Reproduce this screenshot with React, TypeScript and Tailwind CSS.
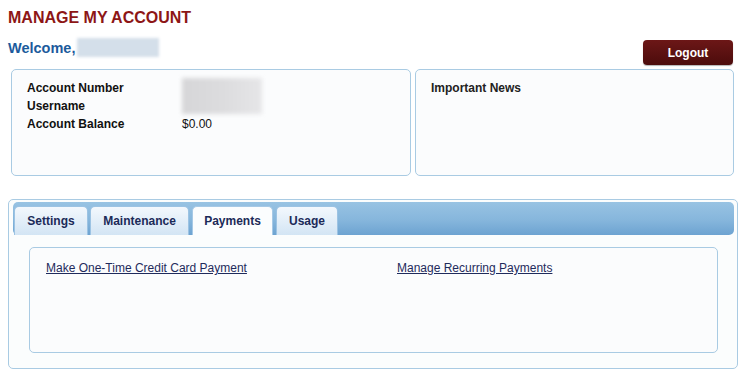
import React from 'react';

const tabs = [
    { label: 'Settings', cls: 'w-[74px]', active: false },
    { label: 'Maintenance', cls: 'w-[99px]', active: false },
    { label: 'Payments', cls: 'w-[81px] ml-[1px]', active: true },
    { label: 'Usage', cls: 'w-[62px] ml-[1px]', active: false },
];

export default function App() {
    return (
        <div className="min-h-screen bg-white font-['Liberation_Sans',Arial,sans-serif] pl-2 pt-[9px]">
            <div className="w-[730px]">
                {/* header */}
                <h1 className="text-[16px] leading-[18px] font-bold text-[#8d1616]">MANAGE MY ACCOUNT</h1>
                <div className="flex items-start mt-[12px]">
                    <div className="flex items-center">
                        <span className="text-[14.5px] leading-[16px] font-bold text-[#1c5b9c]">Welcome,</span>
                        <span className="ml-[2px] -mt-[1px] inline-block w-[82px] h-[19px] bg-[#d4dfea] blur-[1.5px]" />
                    </div>
                    <button
                        type="button"
                        className="ml-auto mr-[5px] mt-[1px] w-[90px] h-[25px] rounded-[4px] bg-gradient-to-b from-[#6c1717] to-[#4c0c0c] text-white text-[12px] font-bold shadow-[0_1px_1px_rgba(0,0,0,0.3)]"
                    >
                        Logout
                    </button>
                </div>

                {/* info boxes */}
                <div className="flex gap-[4px] ml-[3px] mt-[4px]">
                    <div className="w-[400px] h-[107px] border border-[#a9cbe3] rounded-[5px] bg-[#fbfcfd] pl-[15px] pt-[9px]">
                        <div className="grid grid-cols-[155px_1fr] text-[12px] leading-[18px] text-[#111]">
                            <div className="font-bold">Account Number</div>
                            <div className="row-span-2">
                                <div className="-mt-[1px] w-[80px] h-[36px] bg-gradient-to-r from-[#d6d6d8] via-[#dcdcde] to-[#e6e6e8] blur-[2px]" />
                            </div>
                            <div className="font-bold">Username</div>
                            <div className="font-bold">Account Balance</div>
                            <div>$0.00</div>
                        </div>
                    </div>
                    <div className="w-[319px] h-[107px] border border-[#a9cbe3] rounded-[5px] bg-[#fbfcfd] pl-[15px] pt-[9px]">
                        <div className="text-[12px] leading-[18px] font-bold text-[#222]">Important News</div>
                    </div>
                </div>

                {/* tabs panel */}
                <div className="mt-[23px] h-[170px] border border-[#a9cbe3] rounded-[5px] bg-[#fbfdfd] pl-[4px] pr-[3px] pt-[2px]">
                    <div className="h-[33px] rounded-[5px] bg-gradient-to-b from-[#98c3e3] via-[#86b6dc] via-55% to-[#6da3d1] flex items-end pl-[1px] gap-[2px]">
                        {tabs.map((tab) => (
                            <div
                                key={tab.label}
                                className={
                                    tab.active
                                        ? `${tab.cls} h-[29px] rounded-t-[5px] border border-b-0 border-[#a6c9e6] bg-[#fbfdfe] flex items-center justify-center text-[12px] font-bold text-[#1b2a58]`
                                        : `${tab.cls} h-[29px] rounded-t-[5px] border border-b-0 border-[#9cc3e3] bg-gradient-to-b from-[#f3f8fd] to-[#d3e5f4] flex items-center justify-center text-[12px] font-bold text-[#1b2a58]`
                                }
                            >
                                {tab.label}
                            </div>
                        ))}
                    </div>
                    <div className="mx-4 mt-[12px] h-[106px] border border-[#a9cbe3] rounded-[5px] bg-[#fbfcfd] pl-[16px] pt-[11px]">
                        <div className="grid grid-cols-[351px_1fr] text-[12px] leading-[18px]">
                            <a href="#" className="underline text-[#1f2b5c] w-fit">Make One-Time Credit Card Payment</a>
                            <a href="#" className="underline text-[#1f2b5c] w-fit">Manage Recurring Payments</a>
                        </div>
                    </div>
                </div>
            </div>
        </div>
    );
}
